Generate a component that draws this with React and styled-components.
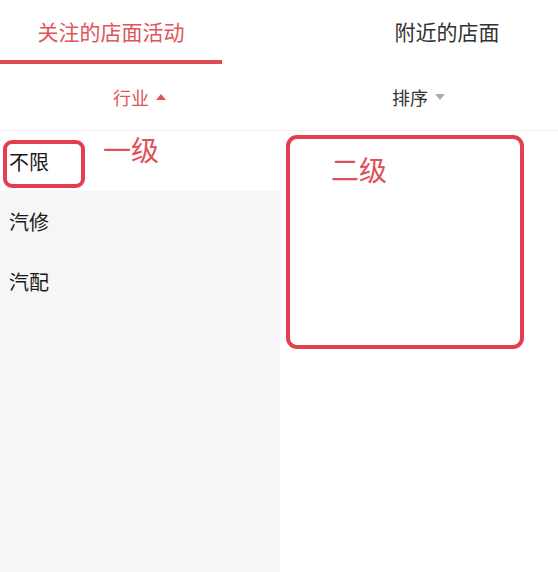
import React from "react";
import styled, { createGlobalStyle } from "styled-components";

const Global = createGlobalStyle`
  html, body {
    margin: 0;
    padding: 0;
    background: #fff;
    font-family: "Noto Sans CJK SC", "Noto Sans", sans-serif;
  }
`;

const Page = styled.div`
  width: 558px;
  height: 572px;
  display: flex;
  flex-direction: column;
  position: relative;
  overflow: hidden;
`;

const Tabs = styled.div`
  height: 64px;
  display: flex;
  justify-content: space-between;
`;

const Tab = styled.div`
  width: 222px;
  display: flex;
  align-items: center;
  justify-content: center;
  font-size: 21px;
  color: ${(p) => (p.active ? "#e0545a" : "#333")};
  border-bottom: 4px solid ${(p) => (p.active ? "#df4b50" : "transparent")};
  box-sizing: border-box;
  padding-top: 2px;
`;

const Filters = styled.div`
  height: 66px;
  display: flex;
  border-bottom: 1px solid #f0f0f0;
`;

const Filter = styled.div`
  flex: 1;
  display: flex;
  align-items: center;
  justify-content: center;
  gap: 7px;
  font-size: 18px;
  color: ${(p) => (p.active ? "#e0545a" : "#333")};
`;

const Arrow = styled.span`
  width: 0;
  height: 0;
  border-left: 5px solid transparent;
  border-right: 5px solid transparent;
  ${(p) =>
    p.up
      ? `border-bottom: 6px solid #e0545a;`
      : `border-top: 6px solid #aaa;`}
`;

const Body = styled.div`
  flex: 1;
  display: flex;
`;

const Side = styled.div`
  width: 280px;
  background: #f6f6f6;
`;

const Item = styled.div`
  height: 60px;
  display: flex;
  align-items: center;
  padding-left: 9px;
  font-size: 20px;
  color: #1a1a1a;
  background: ${(p) => (p.active ? "#fff" : "transparent")};
`;

const Content = styled.div`
  flex: 1;
  background: #fff;
`;

const Mark = styled.div`
  position: absolute;
  border: 4px solid #e43f4e;
  border-radius: 9px;
  box-sizing: border-box;
`;

const Note = styled.div`
  position: absolute;
  font-size: 28px;
  color: #e0505a;
  line-height: 1;
`;

export default function App() {
  return (
    <Page>
      <Global />
      <Tabs>
        <Tab active>关注的店面活动</Tab>
        <Tab>附近的店面</Tab>
      </Tabs>
      <Filters>
        <Filter active>
          行业 <Arrow up />
        </Filter>
        <Filter>
          排序 <Arrow />
        </Filter>
      </Filters>
      <Body>
        <Side>
          <Item active>不限</Item>
          <Item>汽修</Item>
          <Item>汽配</Item>
        </Side>
        <Content />
      </Body>
      <Mark style={{ left: 3, top: 140, width: 82, height: 48 }} />
      <Note style={{ left: 103, top: 135 }}>一级</Note>
      <Mark style={{ left: 286, top: 135, width: 238, height: 214, borderRadius: 11 }} />
      <Note style={{ left: 331, top: 155 }}>二级</Note>
    </Page>
  );
}
